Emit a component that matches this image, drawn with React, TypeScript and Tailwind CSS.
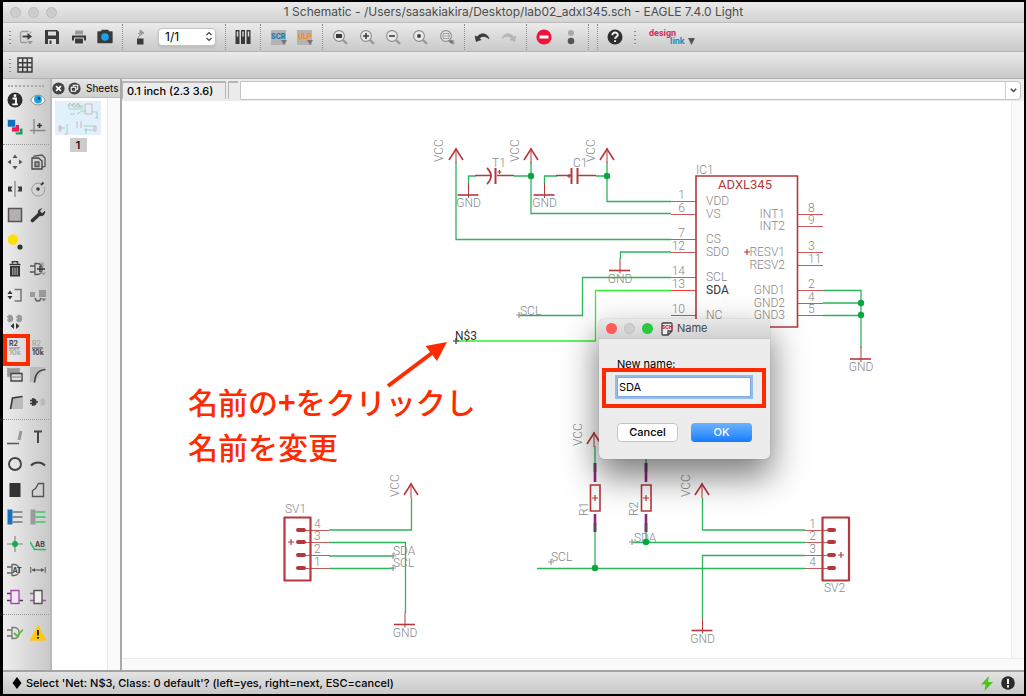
import React from "react";

type Kids = { children: React.ReactNode };

const DARK = "#3a3a3a";
const MID = "#9a9a9a";

function Icon({ children, size = 16 }: Kids & { size?: number }) {
  return (
    <svg width={size} height={size} viewBox="0 0 16 16" fill="none" stroke={DARK} strokeWidth="1.3" aria-hidden="true">
      {children}
    </svg>
  );
}

const Magnifier = ({ children }: { children?: React.ReactNode }) => (
  <Icon>
    <path d="M11 11l4 4" stroke={MID} strokeWidth="2.4" />
    <circle cx="7" cy="7" r="5.4" stroke="#8c8c8c" strokeWidth="1.1" fill="#e9e9e9" />
    {children}
  </Icon>
);

/* ---------- top toolbar ---------- */

function Group({ children, wide }: Kids & { wide: string }) {
  return <div className={"flex h-full " + wide}>{children}</div>;
}

function Tool({ label, children }: Kids & { label: string }) {
  return (
    <button type="button" aria-label={label} className="flex h-full min-w-0 flex-1 items-center justify-center">
      {children}
    </button>
  );
}

function ScriptBadge({ text, color }: { text: string; color: string }) {
  return (
    <span className={"relative flex h-[15px] w-[15px] items-center justify-center bg-[#b3b3b3] text-[7px] leading-[8px] font-extrabold " + color}>
      {text}
      <svg className="absolute -right-px bottom-0" width="6" height="5" viewBox="0 0 6 5" aria-hidden="true">
        <path d="M0 0h6L3 5z" fill="#777" />
      </svg>
    </span>
  );
}

const Divider = () => (
  <div className="flex h-full w-[9px] shrink-0 justify-center py-px">
    <div className="h-full w-px border-l border-dotted border-[#8e8e8e]" />
  </div>
);

const Grip = ({ wide }: { wide: string }) => (
  <div className={"flex shrink-0 flex-col items-center justify-center gap-[3px] " + wide}>
    {[0, 1, 2, 3].map((i) => (
      <span key={i} className="h-px w-[2px] bg-[#8e8e8e]" />
    ))}
  </div>
);

function MainToolbar() {
  return (
    <div className="flex h-[29px] shrink-0 items-center border-b border-[#b4b4b4] bg-linear-to-b from-[#ebebeb] to-[#c9c9c9]">
      <Grip wide="w-[13px]" />
      <Group wide="w-[105px] -ml-[3px]">
        <Tool label="Open">
          <Icon>
            <path d="M10.500 2.500H4.500a2 2 0 0 0-2 2v7a2 2 0 0 0 2 2H9M12.500 2.500v2" stroke={MID} />
            <path d="M4.500 7.500h6" strokeWidth="1.800" />
            <path d="M9.500 4l4.500 3.500L9.500 11z" fill={DARK} stroke="none" />
            <path d="M9 12h6l-3 3.500z" fill={MID} stroke="none" />
          </Icon>
        </Tool>
        <Tool label="Save">
          <Icon>
            <path d="M1 1h12l2 2v12H1z" fill={DARK} stroke="none" />
            <path d="M4 2.500h8v4H4zM4 10h8v5H4z" fill="#dedede" stroke="none" />
            <path d="M5.500 11.500h2V15h-2z" fill={DARK} stroke="none" />
          </Icon>
        </Tool>
        <Tool label="Print">
          <Icon>
            <path d="M4 1.500h8v4H4z" fill={MID} stroke="none" />
            <path d="M1 6.500h14v5H1z" fill={DARK} stroke="none" />
            <path d="M3.500 9h9v6h-9z" fill={DARK} stroke="#dedede" strokeWidth="1" />
          </Icon>
        </Tool>
        <Tool label="CAM processor">
          <Icon>
            <path d="M1 3h3l1-1.500h6L12 3h3v10.500H1z" fill={DARK} stroke={DARK} strokeLinejoin="round" />
            <circle cx="8" cy="8" r="3.800" fill="#16a5ee" stroke="none" />
          </Icon>
        </Tool>
      </Group>
      <Divider />
      <Group wide="w-[26px]">
        <Tool label="Switch to board">
          <Icon>
            <path d="M5 9.500h6.500v6H5z" fill={DARK} stroke="none" />
            <path d="M6.500 9V7.500L9 6V3.500M6 4.500h3.500M8 1l4 2.800-4 2.700z" fill={MID} stroke={MID} strokeWidth="1" />
          </Icon>
        </Tool>
      </Group>
      <div className="relative mx-[5px] w-[58px]">
        <select
          aria-label="Sheet"
          className="block h-[18px] w-full appearance-none rounded-[4px] border border-[#c4c4c4] bg-white pl-[6px] text-[12px] leading-[16px] text-black shadow-sm"
        >
          <option>1/1</option>
        </select>
        <svg className="pointer-events-none absolute top-[3px] right-[3px]" width="8" height="11" viewBox="0 0 8 11" fill="none" stroke="#444" strokeWidth="1.200">
          <path d="M1.500 4L4 1.500 6.500 4M1.500 7L4 9.500 6.500 7" />
        </svg>
      </div>
      <Divider />
      <Group wide="w-[26px]">
        <Tool label="Use library">
          <Icon>
            <path d="M.500 1h4v14h-4zM6 1h4v14H6zM11.500 1h4v14h-4z" fill={DARK} stroke="none" />
            <path d="M1.800 2.500h1.400v5H1.800zM7.300 2.500h1.400v5H7.300zM12.800 2.500h1.400v5h-1.400z" fill="#ddd" stroke="none" />
          </Icon>
        </Tool>
      </Group>
      <Divider />
      <Group wide="w-[53px]">
        <Tool label="Run script">
          <ScriptBadge text="SCR" color="text-[#1d7cb5]" />
        </Tool>
        <Tool label="Run ULP">
          <ScriptBadge text="ULP" color="text-[#f7941d]" />
        </Tool>
      </Group>
      <Divider />
      <Group wide="w-[133px]">
        <Tool label="Zoom to fit">
          <Magnifier>
            <path d="M4 5h6v4H4z" fill={DARK} stroke="none" />
          </Magnifier>
        </Tool>
        <Tool label="Zoom in">
          <Magnifier>
            <path d="M4 7h6M7 4v6" strokeWidth="1.600" />
          </Magnifier>
        </Tool>
        <Tool label="Zoom out">
          <Magnifier>
            <path d="M4 7h6" strokeWidth="1.600" />
          </Magnifier>
        </Tool>
        <Tool label="Redraw">
          <Magnifier>
            <path d="M5.300 5.300h3.400v3.400H5.300z" fill={DARK} stroke="none" />
          </Magnifier>
        </Tool>
        <Tool label="Zoom select">
          <Magnifier>
            <path d="M4 4.500h6v5H4zM4 7h6" stroke={MID} strokeWidth="1" />
            <path d="M9 11.500h6.500L12.300 15z" fill="#777" stroke="none" />
          </Magnifier>
        </Tool>
      </Group>
      <Divider />
      <Group wide="w-[53px]">
        <Tool label="Undo">
          <Icon>
            <path d="M1 7l1.200 5.500 5-1.800-1.700-1.300c2.500-2.700 6-2.700 9.500.6-.5-4.500-7-8-11.700-2.300z" fill={DARK} stroke={DARK} strokeWidth=".6" />
          </Icon>
        </Tool>
        <Tool label="Redo">
          <Icon>
            <path d="M15 7l-1.200 5.500-5-1.800 1.700-1.300C8 6.700 4.500 6.700 1 10c.5-4.500 7-8 11.700-2.300z" fill="#b5b5b5" stroke="#b5b5b5" strokeWidth=".6" />
          </Icon>
        </Tool>
      </Group>
      <Divider />
      <Group wide="w-[53px]">
        <Tool label="Stop">
          <Icon>
            <circle cx="8" cy="8" r="7.600" fill="#f2133c" stroke="none" />
            <path d="M3.500 6.500h9v3h-9z" fill="#fff" stroke="none" />
          </Icon>
        </Tool>
        <Tool label="Go">
          <Icon>
            <circle cx="8" cy="4" r="3" fill="#a9a9a9" stroke="none" />
            <circle cx="8" cy="12" r="3.300" fill="#555" stroke="none" />
          </Icon>
        </Tool>
      </Group>
      <Divider />
      <Divider />
      <Group wide="w-[26px]">
        <Tool label="Help">
          <Icon>
            <circle cx="8" cy="8" r="7.500" fill="#2e2e2e" stroke="none" />
            <path d="M5.300 6.200c0-3.700 5.700-3.300 5.500-.2-.1 1.800-2.700 1.700-2.700 3.800M8.100 11.200v1.900" stroke="#f4f4f4" strokeWidth="1.900" />
          </Icon>
        </Tool>
      </Group>
      <Grip wide="w-[13px]" />
      <button type="button" className="ml-[8px] flex h-full items-center gap-[2px] [font-family:Roboto,sans-serif]" aria-label="design link">
        <span className="flex w-[37px] flex-col text-left text-[9px] leading-[8px] font-bold">
          <span className="text-[#d6295a]">design</span>
          <span className="pl-[21px] text-[#1c8fbd]">link</span>
        </span>
        <svg className="mt-[9px]" width="7" height="7" viewBox="0 0 7 7" aria-hidden="true">
          <path d="M0 0h7L3.500 7z" fill="#555" />
        </svg>
      </button>
    </div>
  );
}

/* ---------- left palette ---------- */

const Gate = ({ color = DARK }: { color?: string }) => (
  <path d="M0 5h5M0 11h5M5 2.500h2c7 0 7 11 0 11H5z" stroke={color} />
);

type Entry = [string, React.ReactNode] | null;

const topTools: Entry[] = [
  ["Info", <Icon><circle cx="8" cy="8" r="7.500" fill="#2e2e2e" stroke="none" /><path d="M5.500 6.500h3.500v6M5.300 12.300h5.500" stroke="#fff" strokeWidth="1.800" /><circle cx="8" cy="3.700" r="1.400" fill="#fff" stroke="none" /></Icon>],
  ["Show", <Icon><path d="M.8 8.200C3.500 1.500 12.500 1.500 15.200 8.200 12.500 14.500 3.500 14.500.8 8.200z" fill="#fff" stroke="#8a8a8a" strokeWidth="1" /><circle cx="8" cy="7.500" r="3.900" fill="#16a0e6" stroke="none" /><circle cx="9" cy="6.500" r="1.300" fill="#0a3e63" stroke="none" /></Icon>],
  ["Display", <Icon><path d="M7 9.500h8.500v6H9z" fill="#15a05a" stroke="none" /><path d="M4.500 5.500h8v7.500h-8z" fill="#ef1a55" stroke="#e4e4e4" strokeWidth=".8" /><path d="M.5.500h8v7.500h-8z" fill="#0f6fc0" stroke="#e4e4e4" strokeWidth=".6" /></Icon>],
  ["Mark", <Icon><path d="M4 0v15M0 11.500h15.500" stroke="#888" /><path d="M7 6.500h5M9.500 4v5" strokeWidth="1.700" /></Icon>],
];

const editTools: Entry[] = [
  ["Move", <Icon><g fill="#555" stroke="none"><path d="M8 .5L10.500 4h-5zM8 15.500L5.500 12h5zM.5 8L4 5.500v5zM15.500 8L12 5.500v5z" /></g></Icon>],
  ["Copy", <Icon><path d="M4 3.500V2l8-1 3 3v8.500l-3 .5" stroke="#555" /><path d="M2 4h6.500L12 7v8H2z" stroke="#444" /><path d="M5 8h4v4.500H5z" fill={MID} stroke="#555" /></Icon>],
  ["Mirror", <Icon><path d="M8 0v16" stroke="#888" /><path d="M1 5.500h4.500L4 8l1.500 2.500H1zM15 5.500h-4.500L12 8l-1.500 2.500H15z" fill={DARK} stroke="none" /></Icon>],
  ["Rotate", <Icon><path d="M11 2.700A6.500 6.500 0 1 0 14.200 6" stroke={MID} strokeWidth="1" /><circle cx="8" cy="8" r="1.800" fill={DARK} stroke="none" /><path d="M11 4l2.500-2.500" strokeWidth="2" /></Icon>],
  ["Group", <Icon><path d="M1.500 1.500h13v13h-13z" fill="#b4b0b4" stroke="#555" strokeWidth="1.500" /></Icon>],
  ["Change", <Icon><path d="M2.500 13.500l6.500-6" stroke="#333" strokeWidth="3.600" strokeLinecap="round" /><path d="M12.500 1.200L10 4l2 2.200 3-2.400c.8 3.200-2 6-5 5.200C6.500 8 6.800 1.500 12.500 1.200z" fill="#333" stroke="none" /></Icon>],
  ["Paste", <Icon><circle cx="6" cy="5.500" r="5.300" fill="#ffdf00" stroke="none" /><circle cx="13" cy="13" r="2.600" fill="#333" stroke="none" /></Icon>],
  null,
  ["Delete", <Icon><path d="M5.500 2.500v-2h5v2M2.500 3.500h11" stroke="#333" strokeWidth="1.600" /><path d="M3 5h10v10.500H3z" fill="#333" stroke="none" /><path d="M5.800 6.500v7.500M8 6.500v7.500M10.200 6.500v7.500" stroke="#ccc" strokeWidth=".9" /></Icon>],
  ["Add", <Icon><path d="M9 1.500h5v4H9z" fill="#aaa" stroke="none" /><Gate color="#555" /><path d="M7 8h8M10 5v6" strokeWidth="1.500" /><path d="M11 11.500h5l-2.500 3z" fill="#999" stroke="none" /></Icon>],
  ["Pinswap", <Icon><path d="M7.500 2.500h6.500v11.500H7.500" stroke="#777" strokeWidth="1.500" /><path d="M3 3.500L5.500 7h-5zM3 12.500L.5 9h5z" fill="#333" stroke="none" /></Icon>],
  ["Replace", <Icon><path d="M0 5h5v5H0zM9 3h7v7H9z" fill={MID} stroke="none" /><path d="M5 11c1 4 5 4 6 0" stroke="#666" strokeWidth="1.600" /><path d="M11.500 11.500H16l-2.200 3z" fill="#777" stroke="none" /></Icon>],
  ["Gateswap", <Icon><path d="M0 3h2M0 6h2M2 1.500h1c3.500 0 3.500 6 0 6H2zM9 3h2M9 6h2M11 1.500h1c3.500 0 3.500 6 0 6h-1z" fill={MID} stroke={MID} /><path d="M7 9v6l-3.500-3zM9 9v6l3.500-3z" fill="#333" stroke="none" /></Icon>],
  null,
  ["Name", <Label top="R2" bottom="10k" active />],
  ["Value", <Label top="R2" bottom="10k" />],
  ["Smash", <Icon><path d="M.5 1.500h12v8H.5z" fill={MID} stroke={MID} strokeDasharray="2 1" /><path d="M4 6.500h11v7.500H4z" fill="#ddd" stroke="#444" strokeWidth="1.400" /><path d="M4 10h11" stroke={MID} /></Icon>],
  ["Miter", <Icon><path d="M0 0h15L5 15H0z" fill="#bbb" stroke="none" /><path d="M4.500 15.500C5 7 8 3 15.500 2.500" strokeWidth="1.600" /></Icon>],
  ["Split", <Icon><path d="M4 15L6 4l10-1v12z" fill="#bbb" stroke="none" /><path d="M3.500 15L5.500 4l10-1.500" strokeWidth="1.600" /></Icon>],
  ["Invoke", <Icon><path d="M0 6.500h2M0 9.500h2M2.500 4.800h.5c4 0 4 6.400 0 6.400h-.5zM6 8h2" fill={DARK} /><path d="M9.500 6.500h1M9.500 9.500h1M11.500 5h.5c3.500 0 3.500 6 0 6h-.5z" fill="#bbb" stroke="#bbb" /></Icon>],
];

const drawTools: Entry[] = [
  ["Wire", <Icon><path d="M0 14.500h12" stroke="#555" strokeWidth="1.500" /><path d="M12 11l2-9" stroke="#999" strokeWidth="3" /></Icon>],
  ["Text", <Icon><path d="M4 2.500h8M8 2v12" stroke="#444" strokeWidth="2" /></Icon>],
  ["Circle", <Icon><circle cx="8" cy="8" r="6" stroke="#444" strokeWidth="1.900" /></Icon>],
  ["Arc", <Icon><path d="M1 9.500C5 5.500 11 5.500 15 9.500" stroke="#444" strokeWidth="2" /></Icon>],
  ["Rect", <Icon><path d="M2.500 1h11v14h-11z" fill="#333" stroke="none" /></Icon>],
  ["Polygon", <Icon><path d="M2.500 14.500V8.500l3-2 3-5h5v13z" stroke="#555" strokeWidth="1.400" /></Icon>],
  ["Bus", <Icon><path d="M.5.500h5v15h-5z" fill="#1672c0" stroke="none" /><path d="M5.500 3h10M5.500 8h10M5.500 13h10" stroke="#777" strokeWidth="1.700" /></Icon>],
  ["Net", <Icon><path d="M.5.500h5v15h-5z" fill="#9b9b9b" stroke="none" /><path d="M5.500 3h10M5.500 8h10M5.500 13h10" stroke="#3cc56c" strokeWidth="1.700" /></Icon>],
  ["Junction", <Icon><path d="M0 8h16M8 0v16" stroke="#888" strokeWidth="1.200" /><circle cx="8" cy="8" r="3" fill="#16ad4a" stroke="none" /></Icon>],
  ["Label", <Icon><path d="M0 6l4.500 7.500H16" stroke="#2cbc5f" strokeWidth="1.600" /><text x="5" y="10.500" fontSize="7" fontWeight="700" fill="#444" stroke="none">AB</text></Icon>],
  ["Attribute", <Icon><Gate color="#666" /><text x="5.500" y="11" fontSize="7" fontWeight="700" fill="#444" stroke="none">AT</text></Icon>],
  ["Dimension", <Icon><path d="M.7 5v6M15.300 5v6M2 8h12" stroke="#777" /><path d="M2 8l3-2v4zM14 8l-3-2v4z" fill="#555" stroke="none" /></Icon>],
  ["Module", <Icon><path d="M0 4.500h4M0 11.500h4M12 11.500h4" stroke="#444" strokeWidth="1.700" /><path d="M4 1.500h8v13H4z" fill="#f1e6f3" stroke="#a64fb0" strokeWidth="1.400" /></Icon>],
  ["Port", <Icon><path d="M0 4.500h4M0 11.500h4M12 11.500h4" stroke="#a64fb0" strokeWidth="1.700" /><path d="M4 1.500h8v13H4z" fill="#eee" stroke="#555" strokeWidth="1.400" /></Icon>],
];

const checkTools: Entry[] = [
  ["ERC", <Icon><Gate color="#777" /><path d="M7 8l3 3 6-6.500" stroke="#4ec22c" strokeWidth="1.800" /></Icon>],
  ["Errors", <Icon><path d="M8 1l7.500 14H.5z" fill="#ffc90e" stroke="#ffc90e" strokeLinejoin="round" /><path d="M8 5v5.500M8 12v1.800" stroke="#222" strokeWidth="1.900" /></Icon>],
];

function Label({ top, bottom, active }: { top: string; bottom: string; active?: boolean }) {
  return (
    <svg width="16" height="18" viewBox="0 0 16 18" fontSize="7" fontWeight="700" aria-hidden="true">
      <text x="2" y="7" fill={active ? "#444" : "#aaa"}>{top}</text>
      <path d="M2 9h11" stroke={active ? "#777" : "#444"} strokeWidth="1" />
      <text x="2" y="16" fill={active ? "#aaa" : "#444"}>{bottom}</text>
    </svg>
  );
}

function PaletteGrid({ tools, tall }: { tools: Entry[]; tall: string }) {
  return (
    <div className={"grid auto-rows-fr grid-cols-2 " + tall}>
      {tools.map((t, i) =>
        t ? (
          <button key={t[0]} type="button" aria-label={t[0]} className="relative flex min-h-0 items-center justify-center">
            {t[1]}
            {t[0] === "Name" && <span className="absolute -top-px -right-[4px] -bottom-[4px] left-0 border-4 border-[#ff2a00]" />}
          </button>
        ) : (
          <span key={i} />
        ),
      )}
    </div>
  );
}

const PaletteRule = () => (
  <div className="flex h-[9px] items-center">
    <div className="w-full border-t border-dotted border-[#999]" />
  </div>
);

function Palette() {
  return (
    <nav className="w-[49px] shrink-0 border-r-2 border-[#b9b9b9] bg-linear-to-r from-[#ededed] to-[#c9c9c9] pr-px pt-[6px]">
      <div className="mx-[5px] border-t-2 border-dotted border-[#aaa]" />
      <PaletteGrid tools={topTools} tall="h-[53px]" />
      <PaletteRule />
      <PaletteGrid tools={editTools} tall="h-[266px]" />
      <PaletteRule />
      <PaletteGrid tools={drawTools} tall="h-[186px]" />
      <PaletteRule />
      <PaletteGrid tools={checkTools} tall="h-[27px]" />
    </nav>
  );
}

/* ---------- sheets ---------- */

function Sheets() {
  return (
    <aside className="flex w-[70px] shrink-0 flex-col border-r-2 border-[#a9a9a9] bg-white">
      <div className="flex h-[19px] items-center gap-[3px] border-b border-[#bbb] bg-linear-to-b from-[#e6e6e6] to-[#cfcfcf]">
        <button type="button" aria-label="Close sheets">
          <Icon size={13}>
            <circle cx="8" cy="8" r="7.500" fill="#444" stroke="none" />
            <path d="M5 5l6 6M11 5l-6 6" stroke="#fff" strokeWidth="2.200" />
          </Icon>
        </button>
        <button type="button" aria-label="Float sheets">
          <Icon size={13}>
            <circle cx="8" cy="8" r="7.500" fill="#444" stroke="none" />
            <path d="M6.500 6V4h5.500v5h-2M4 6.500h5.500v5H4z" stroke="#fff" strokeWidth="1.300" />
          </Icon>
        </button>
        <span className="pl-[2px] text-[10px]">Sheets</span>
      </div>
      <div className="flex min-h-0 flex-1">
        <div className="flex flex-1 flex-col items-center pt-[3px] pr-[3px]">
          <svg width="46" height="34" viewBox="0 0 46 34" className="bg-[#e1f0fd]" fill="none" strokeWidth=".8" aria-hidden="true">
            <path d="M14 3v5h14M18 3v3h10M23 3v2h5M20 13h-5M37 11h5v6M22 13l5-3h4M4 27h6M29 25h10M29 29h10M12 23v9M31 27v6" stroke="#8fcfae" />
            <path d="M30 3h7v10h-7zM13 5l2-3 2 3M17 5l2-3 2 3M21 5l2-3 2 3M4 25h2v5H4zM39 25h2v5h-2zM22 20v7M26 20v7M40 17h3M10 33h3" stroke="#d6a3aa" />
          </svg>
          <span className="mt-[3px] w-[17px] bg-[#cdcdcd] text-center text-[11px] leading-[14px] font-medium">1</span>
        </div>
        <div className="w-[13px] border-l border-[#e8e8e8] bg-[#fafafa]" />
      </div>
    </aside>
  );
}

/* ---------- schematic ---------- */

const RED = "#b5393c";
const GREEN = "#2db45d";

const Vcc = ({ x, y, tx }: { x: number; y: number; tx: number }) => (
  <g>
    <path d={`M${x} ${y}v15`} stroke={RED} strokeWidth="1" />
    <path d={`M${x - 7} ${y + 12}L${x} ${y + 1}l7 11`} fill="none" stroke={RED} strokeWidth="1.600" />
    <text transform={`translate(${tx} ${y + 14}) rotate(-90)`}>VCC</text>
  </g>
);

const Gnd = ({ x, y }: { x: number; y: number }) => (
  <g>
    <path d={`M${x} ${y - 12}v15`} stroke={RED} strokeWidth="1" />
    <path d={`M${x - 11} ${y}h21`} stroke={RED} strokeWidth="1.600" />
    <text x={x} y={y + 12} textAnchor="middle">GND</text>
  </g>
);

const Plus = ({ x, y, color = "#999", r = 3 }: { x: number; y: number; color?: string; r?: number }) => (
  <path d={`M${x - r} ${y}h${2 * r}M${x} ${y - r}v${2 * r}`} stroke={color} strokeWidth="1.200" />
);

const Resistor = ({ x, name, tx }: { x: number; name: string; tx: number }) => (
  <g>
    <path d={`M${x} 463v19M${x} 514v18`} stroke="#92257c" strokeWidth="2.600" />
    <path d={`M${x} 463v9M${x} 523v9`} stroke="#5e4560" strokeWidth="2.600" />
    <path d={`M${x - 4.500} 485h9.500v26h-9.500z`} fill="none" stroke={RED} strokeWidth="1.600" />
    <Plus x={x} y={498} color={RED} />
    <text transform={`translate(${tx} 516) rotate(-90)`}>{name}</text>
  </g>
);

const leftPins: [number, string, string][] = [
  [201, "1", "VDD"], [214, "6", "VS"], [239, "7", "CS"], [252, "12", "SDO"],
  [277, "14", "SCL"], [290, "13", "SDA"], [315, "10", "NC"],
];
const rightPins: [number, string, string][] = [
  [214, "8", "INT1"], [226, "9", "INT2"], [252, "3", "RESV1"], [265, "11", "RESV2"],
  [290, "2", "GND1"], [303, "4", "GND2"], [315, "5", "GND3"],
];
const dots = [[531, 176], [607, 176], [861, 303], [861, 315], [595, 568], [646, 542]];
const rows = [530, 542, 555, 568];

function Schematic() {
  return (
    <svg width="888" height="557" viewBox="122 101 888 557" fill="none" className="block shrink-0 [font-family:Roboto,sans-serif]" role="img" aria-label="Schematic sheet">
      <g stroke={GREEN} strokeWidth="1.300">
        <path d="M456 162V239.500H671M531 162V213.500H671M607 162V201.500H671" />
        <path d="M468.500 190V176H476M514 176H531M544.500 184V176H557M596 176H607" />
        <path d="M671 252H620.500V259M671 277.500H582.500V315.500H519" />
        <path d="M823 290.500H861V348M823 303H861M823 315.500H861" />
        <path d="M329 530H411.500V498M329 542.500H405.500V613M329 556H394M329 568.500H394" />
        <path d="M595 446V463M646 450V463M595 532V568M646 532V542M632 542.500H805M537 568.500H805" />
        <path d="M702.500 498V530H805M805 555.500H702.500V619" />
      </g>
      <path d="M671 290.500H595.500V341H457" stroke="#2ff02f" strokeWidth="1.300" />

      <g fill="#888" fontSize="12" fontWeight="300" stroke="none">
        <Vcc x={456} y={148} tx={443} />
        <Vcc x={531} y={148} tx={519} />
        <Vcc x={607} y={148} tx={595} />
        <Vcc x={411} y={483} tx={399} />
        <Vcc x={594} y={432} tx={582} />
        <Vcc x={702} y={483} tx={690} />
        <Gnd x={468.500} y={195} />
        <Gnd x={544.500} y={195} />
        <Gnd x={620} y={270.500} />
        <Gnd x={861} y={359} />
        <Gnd x={405} y={624.500} />
        <Gnd x={702.500} y={630.500} />
        <Resistor x={595} name="R1" tx={588} />
        <Resistor x={646} name="R2" tx={638} />

        {leftPins.map(([y, no, name]) => (
          <g key={no}>
            <path d={`M671 ${y + 0.5}H696`} stroke={no === "13" ? "#ff3a3a" : "#c85a5c"} />
            <text x="685" y={y - 2} textAnchor="end">{no}</text>
            <text x="706" y={y + 4} fill={no === "13" ? "#333" : "#888"} fontWeight={no === "13" ? 400 : 300}>{name}</text>
          </g>
        ))}
        {rightPins.map(([y, no, name]) => (
          <g key={no}>
            <path d={`M797 ${y + 0.5}h26`} stroke="#c85a5c" />
            <text x="808" y={y - 2}>{no}</text>
            <text x="785" y={y + 4} textAnchor="end">{name}</text>
          </g>
        ))}
        {rows.map((y, i) => (
          <g key={y}>
            <path d={`M303 ${y + 0.5}h26M827 ${y + 0.5}h-22`} stroke="#c85a5c" />
            <path d={`M298 ${y}h6M829 ${y}h5`} stroke={RED} strokeWidth="4" strokeLinecap="round" />
            <text x="314" y={y - 2}>{4 - i}</text>
            <text x="816" y={y - 2} textAnchor="end">{i + 1}</text>
          </g>
        ))}

        <text x="492" y="167">T1</text>
        <text x="573" y="167">C1</text>
        <text x="696" y="174">IC1</text>
        <text x="285" y="513">SV1</text>
        <text x="824" y="592">SV2</text>
        <text x="520" y="315">SCL</text>
        <text x="393" y="555">SDA</text>
        <text x="393" y="567">SCL</text>
        <text x="634" y="542">SDA</text>
        <text x="551" y="561">SCL</text>
        <text x="455" y="340" fill="#333" fontWeight="400">N$3</text>
        <text x="745" y="189" fontSize="13" fontWeight="400" fill={RED} textAnchor="middle">ADXL345</text>
      </g>

      <g stroke={RED} strokeWidth="1.600">
        <path d="M696 176H797.500V327H696z" />
        <path d="M284.500 517.500H310.500V580.500H284.500zM822.500 517.500H849V580.500H822.500z" strokeWidth="2.200" strokeLinejoin="round" />
        <path d="M475 175.500H491M497 175.500H514M556 175.500H571M578 175.500H596" />
        <path d="M495.500 168V184M571.500 168V184M577.500 168V184" strokeWidth="2" />
        <path d="M487 168Q495 176 487 184" strokeWidth="1.800" />
      </g>
      <Plus x={499.500} y={172} r={2} color={RED} />
      <Plus x={569} y={176} r={2} color={RED} />
      <Plus x={747} y={252} color={RED} />
      <Plus x={291} y={542} color={RED} />
      <Plus x={841} y={555} color={RED} />
      <Plus x={519} y={315} />
      <Plus x={456} y={341} color="#333" />
      <Plus x={393} y={556} />
      <Plus x={393} y={568} />
      <Plus x={632} y={542} />
      <Plus x={551} y={562} />
      {dots.map(([x, y]) => (
        <circle key={`${x}-${y}`} cx={x} cy={y} r="3.200" fill="#0ba53e" />
      ))}

      <path d="M388 386L432 353" stroke="#ff2a00" strokeWidth="4" />
      <path d="M447 342L425.500 346L437 361z" fill="#ff2a00" />
    </svg>
  );
}

function NameDialog() {
  return (
    <form
      role="dialog"
      aria-label="Name"
      onSubmit={(e) => e.preventDefault()}
      className="absolute top-[218px] left-[477px] w-[171px] rounded-[5px] bg-[#ececec] pb-[17px] shadow-[0_0_1px_rgba(0,0,0,0.4),0_16px_34px_2px_rgba(0,0,0,0.5)]"
    >
      <div className="flex h-[20px] items-center rounded-t-[5px] border-b border-[#c6c6c6] bg-linear-to-b from-[#e8e8e8] to-[#d2d2d2] pl-[7px]">
        <div className="flex gap-[7px]">
          <button type="button" aria-label="Close" className="size-[11px] rounded-full bg-[#fc5b57]" />
          <button type="button" aria-label="Minimize" className="size-[11px] rounded-full border border-[#c0c0c0] bg-[#cfcfcf]" />
          <button type="button" aria-label="Zoom" className="size-[11px] rounded-full bg-[#29c840]" />
        </div>
        <svg className="ml-[8px]" width="12" height="14" viewBox="0 0 12 14" aria-hidden="true">
          <path d="M1 2a1 1 0 0 1 1-1h8a1 1 0 0 1 1 1v7l-4 4H2a1 1 0 0 1-1-1zM11 9H7v4" fill="#eee" stroke="#444" strokeWidth="1.300" />
          <text x="1" y="7" fontSize="5" fontWeight="800" fill="#d02028">SCH</text>
        </svg>
        <span className="ml-[4px] text-[11px] text-[#444]">Name</span>
      </div>
      <div className="px-[18px] pt-[18px]">
        <label htmlFor="net-name" className="block text-[11px] leading-[14px]">New name:</label>
        <input
          id="net-name"
          defaultValue="SDA"
          className="mt-[6px] h-[20px] w-[134px] border border-[#7fa9dc] bg-white px-px text-[11px] ring-2 ring-[#92bbee] outline-none"
        />
        <div className="mt-[26px] flex gap-[13px]">
          <button type="button" className="h-[19px] w-[61px] rounded-[4px] border border-[#c3c3c3] bg-white text-[11px] leading-[17px] font-medium">Cancel</button>
          <button type="submit" className="h-[19px] w-[61px] rounded-[4px] bg-linear-to-b from-[#6ab2fb] to-[#107cfd] text-[11px] leading-[17px] font-medium text-white">OK</button>
        </div>
      </div>
    </form>
  );
}

/* ---------- window ---------- */

export default function App() {
  return (
    <div className="flex min-h-screen flex-col bg-black pt-[2px] pr-[2px] pb-[2px] pl-[3px] text-black [font-family:Inter,'Noto_Sans_CJK_JP',sans-serif]">
      <header className="relative flex h-[21px] shrink-0 items-center justify-center border-b border-[#bdbdbd] bg-linear-to-b from-[#eaeaea] to-[#d3d3d3]">
        <div className="absolute left-[7px] flex gap-[7px]">
          {["Close", "Minimize", "Zoom"].map((l) => (
            <button key={l} type="button" aria-label={l} className="size-[11px] rounded-full border border-[#bcbcbc] bg-[#cdcdcd]" />
          ))}
        </div>
        <h1 className="text-[12px] leading-[20px] whitespace-nowrap text-[#4c4c4c]">
          1 Schematic - /Users/sasakiakira/Desktop/lab02_adxl345.sch - EAGLE 7.4.0 Light
        </h1>
      </header>
      <MainToolbar />
      <div className="flex h-[27px] shrink-0 items-center border-b border-[#b0b0b0] bg-linear-to-b from-[#ebebeb] to-[#c9c9c9]">
        <Grip wide="w-[13px]" />
        <button type="button" aria-label="Grid" className="pl-px">
          <Icon>
            <path d="M1 1h14v14H1zM1 5.700h14M1 10.300h14M5.700 1v14M10.300 1v14" strokeWidth="1.400" />
          </Icon>
        </button>
      </div>
      <div className="flex min-h-0 flex-1 bg-[#ececec]">
        <Palette />
        <Sheets />
        <main className="flex min-w-0 flex-1 flex-col">
          <div className="flex h-[22px] shrink-0 items-center gap-[2px] pr-[3px]">
            <output className="h-[18px] w-[104px] border-t-2 border-r border-l border-[#b5b5b5] pl-[4px] text-[11px] leading-[16px] font-medium whitespace-nowrap">0.1 inch (2.3 3.6)</output>
            <span className="h-[18px] w-[10px] border-t-2 border-l border-[#b5b5b5]" />
            <div className="flex h-[19px] flex-1 rounded-r-[4px] border border-[#c4c4c4] bg-white">
              <input aria-label="Command" className="min-w-0 flex-1 px-1 text-[11px] outline-none" />
              <button type="button" aria-label="History" className="flex w-[15px] items-center justify-center border-l border-[#d0d0d0]">
                <svg width="7" height="5" viewBox="0 0 7 5" fill="none" stroke="#444" strokeWidth="1.500">
                  <path d="M.8.800L3.500 3.500 6.200.8" />
                </svg>
              </button>
            </div>
          </div>
          <div className="flex min-h-0 flex-1">
            <div className="relative min-w-0 flex-1 overflow-hidden bg-white">
              <Schematic />
              <p className="absolute top-[278px] left-[66px] text-[30px] leading-[45px] font-medium whitespace-nowrap text-[#ff2a00] [font-family:'Noto_Sans_CJK_JP',sans-serif]">
                名前の<b>+</b>をクリックし
                <br />
                名前を変更
              </p>
              <NameDialog />
              <div className="pointer-events-none absolute top-[267px] left-[480px] h-[40px] w-[164px] border-4 border-[#ff2a00]" />
            </div>
            <div className="w-[13px] shrink-0 border-l border-[#ececec] bg-[#fafafa]" />
          </div>
          <div className="h-[12px] shrink-0 border-t border-[#ececec] bg-[#fafafa]" />
        </main>
      </div>
      <footer className="flex h-[24px] shrink-0 items-center border-t-2 border-[#a4a4a4] bg-linear-to-b from-[#e3e3e3] to-[#c8c8c8] pr-[9px] pl-[9px] text-[11px] font-medium">
        <svg width="10" height="12" viewBox="0 0 10 12" aria-hidden="true">
          <path d="M5 0l4.500 6L5 12 .5 6z" fill="#000" />
        </svg>
        <span className="ml-[4px] flex-1">Select 'Net: N$3, Class: 0 default'? (left=yes, right=next, ESC=cancel)</span>
        <svg width="12" height="15" viewBox="0 0 12 15" aria-hidden="true">
          <path d="M8 0L0 8.500h4.500L3.500 15 12 6H7z" fill="#4fc31d" />
        </svg>
        <span className="ml-[8px] flex">
          <Icon size={14}>
            <circle cx="8" cy="8" r="7.800" fill="#2b2b2b" stroke="none" />
            <path d="M8 3v6M8 10.500v2.500" stroke="#fff" strokeWidth="2.200" />
          </Icon>
        </span>
      </footer>
    </div>
  );
}
